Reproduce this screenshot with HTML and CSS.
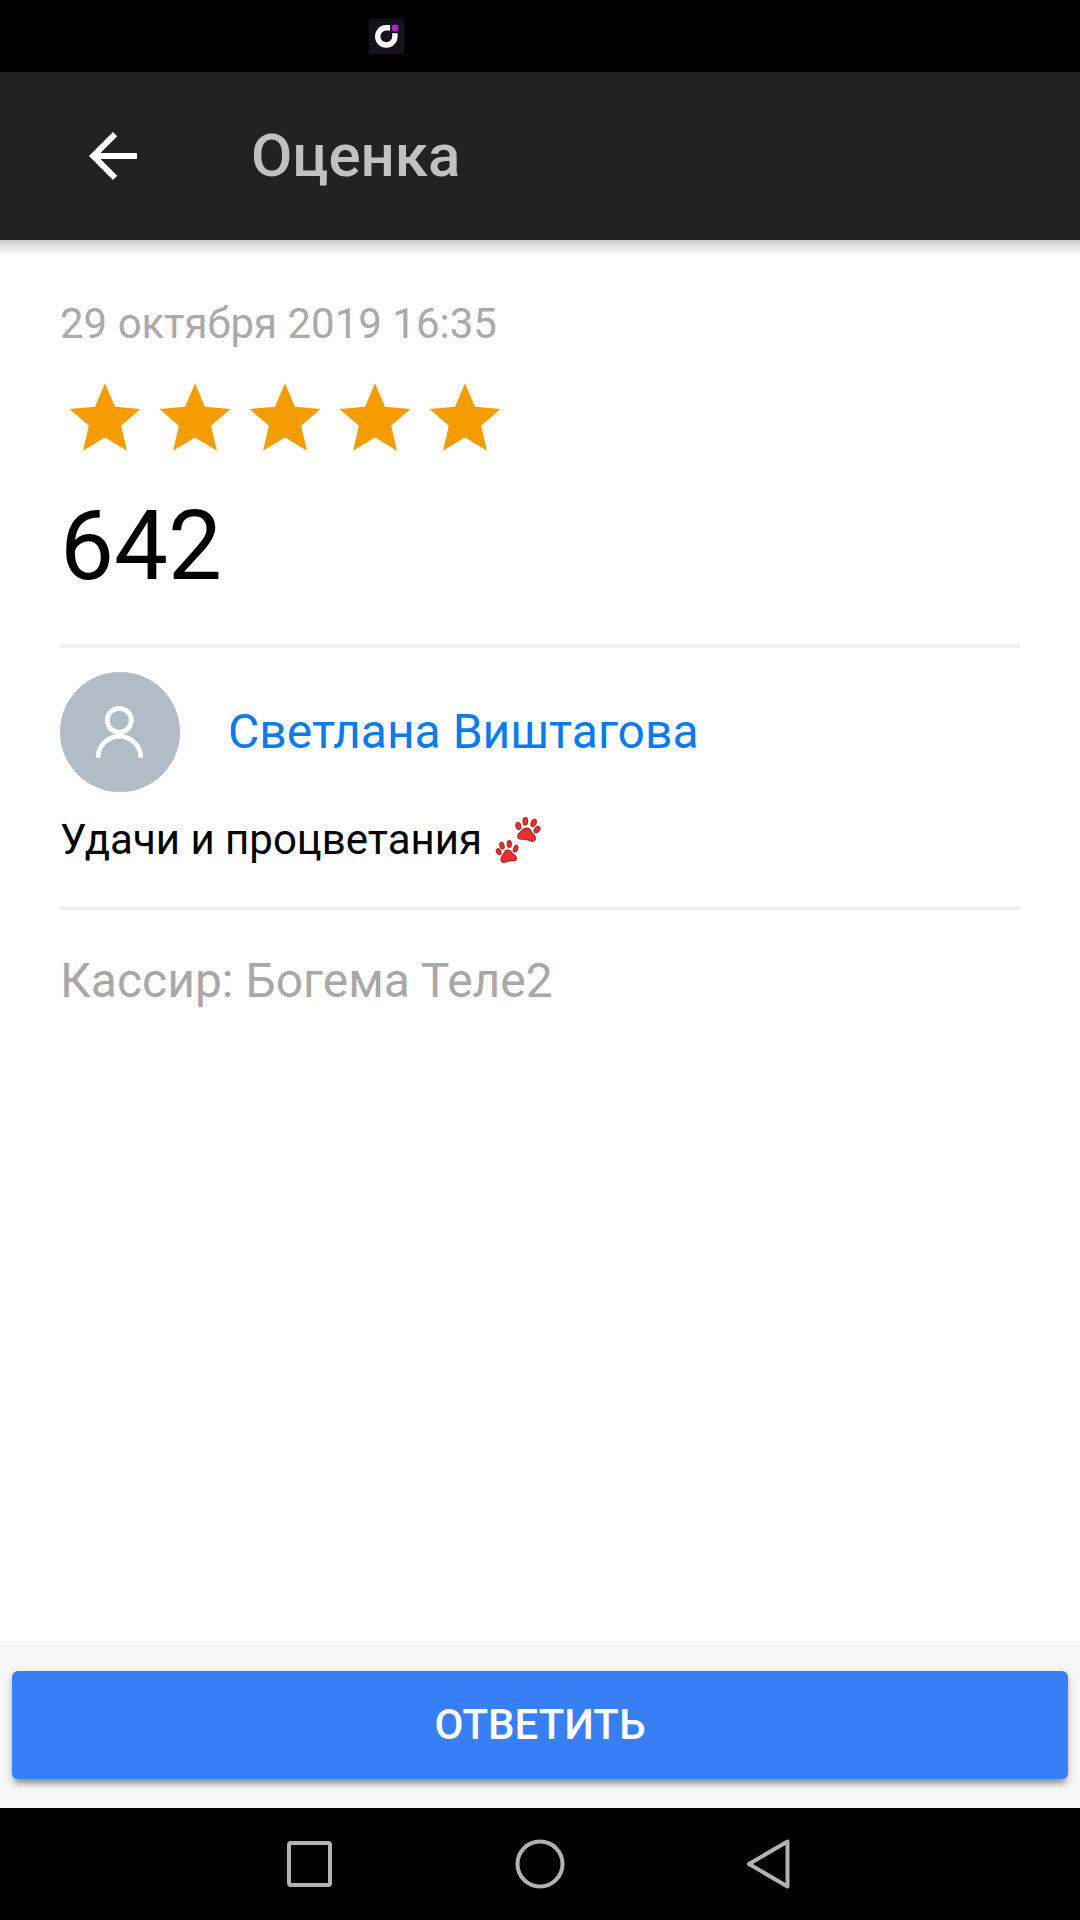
FILE: index.html
```html
<!DOCTYPE html>
<html lang="ru">
<head>
  <meta charset="utf-8">
  <meta name="viewport" content="width=device-width, initial-scale=1">
  <title>Оценка</title>
  <link rel="stylesheet" href="styles.css">
</head>
<body>
  <div class="status-bar">
    <svg class="status-icon" viewBox="0 0 35 35" aria-hidden="true">
      <rect width="35" height="35" fill="#150f20"/>
      <path d="M21 8.8H17.3A8.6 8.6 0 1 0 25.9 17.4V14.2" fill="none" stroke="#fff" stroke-width="5.4"/>
      <circle cx="26" cy="9" r="3.4" fill="#b91fd8"/>
    </svg>
  </div>

  <header class="toolbar">
    <button class="back-button" type="button" aria-label="Назад">
      <svg viewBox="0 0 24 24" aria-hidden="true"><path fill="#fff" d="M20 11H7.83l5.59-5.59L12 4l-8 8 8 8 1.41-1.41L7.83 13H20z"/></svg>
    </button>
    <h1 class="toolbar-title">Оценка</h1>
  </header>

  <main class="content">
    <time class="date" datetime="2019-10-29T16:35">29 октября 2019 16:35</time>
    <div class="stars" role="img" aria-label="5 из 5">
      <svg viewBox="0 0 512 512"><path id="star" d="M256 372.686L380.83 448l-33.021-142.066L458 210.409l-145.267-12.267L256 64l-56.743 134.142L54 210.409l110.192 95.525L131.161 448z"/></svg>
      <svg viewBox="0 0 512 512"><use href="#star"/></svg>
      <svg viewBox="0 0 512 512"><use href="#star"/></svg>
      <svg viewBox="0 0 512 512"><use href="#star"/></svg>
      <svg viewBox="0 0 512 512"><use href="#star"/></svg>
    </div>
    <p class="amount">642</p>

    <section class="review">
      <div class="author">
        <svg class="avatar" viewBox="0 0 120 120" aria-hidden="true">
          <circle cx="60" cy="60" r="60" fill="#b0bcc6"/>
          <g fill="none" stroke="#fff" stroke-width="4.8">
            <circle cx="59.3" cy="48.3" r="12"/>
            <path d="M38 85.8A21.4 21.4 0 0 1 80.8 85.8"/>
          </g>
        </svg>
        <a class="author-name" href="#">Светлана Виштагова</a>
      </div>
      <p class="comment">
        Удачи и процветания
        <svg class="paws" viewBox="0 0 144 144" role="img" aria-label="Следы лап">
          <g fill="#e5322d" stroke="#b62b2b" stroke-width="4">
            <ellipse cx="73" cy="30" rx="7" ry="10" transform="rotate(-12 73 30)"/>
            <ellipse cx="94" cy="16" rx="7" ry="11"/>
            <ellipse cx="119" cy="21" rx="7" ry="11" transform="rotate(25 119 21)"/>
            <ellipse cx="129" cy="41" rx="7" ry="10" transform="rotate(40 129 41)"/>
            <path d="M86 42C94 33 108 35 111 46C113 53 122 56 124 64C126 74 117 78 109 74C101 69 92 69 84 69C75 70 69 64 72 57C75 51 81 48 86 42Z"/>
            <ellipse cx="14" cy="107" rx="6" ry="9" transform="rotate(-28 14 107)"/>
            <ellipse cx="24" cy="89" rx="6" ry="10" transform="rotate(-15 24 89)"/>
            <ellipse cx="46" cy="84" rx="6" ry="10"/>
            <ellipse cx="65" cy="98" rx="6" ry="10" transform="rotate(22 65 98)"/>
            <path d="M32 108C37 100 49 101 53 110C56 115 65 118 67 125C68 132 62 135 55 134C47 132 42 135 36 138C28 141 20 137 21 129C23 122 28 116 32 108Z"/>
          </g>
        </svg>
      </p>
    </section>

    <p class="cashier">Кассир: Богема Теле2</p>
  </main>

  <footer class="actions">
    <button class="reply-button" type="button">ОТВЕТИТЬ</button>
  </footer>

  <nav class="system-nav" aria-label="Система">
    <button type="button" aria-label="Недавние">
      <svg viewBox="0 0 56 56"><rect x="7" y="7" width="41" height="42" rx="2"/></svg>
    </button>
    <button type="button" aria-label="Домой">
      <svg viewBox="0 0 56 56"><circle cx="28" cy="28" r="22.5"/></svg>
    </button>
    <button type="button" aria-label="Назад">
      <svg viewBox="0 0 56 56"><path d="M45.5 5.5V50.5L7 28Z"/></svg>
    </button>
  </nav>
</body>
</html>
```
FILE: styles.css
```css
* {
  box-sizing: border-box;
}

body {
  margin: 0;
  min-height: 100vh;
  display: flex;
  flex-direction: column;
  background: #fff;
  color: #000;
  font-family: Roboto, "Noto Sans", sans-serif;
  font-size: 42px;
  line-height: 60px;
}

button {
  margin: 0;
  padding: 0;
  border: 0;
  background: none;
  font: inherit;
  cursor: pointer;
}

svg {
  display: block;
}

h1,
p {
  margin: 0;
}

.status-bar {
  height: 72px;
  padding-left: 369px;
  display: flex;
  align-items: center;
  background: #000;
}

.status-icon {
  width: 35px;
  height: 35px;
}

.toolbar {
  position: relative;
  height: 168px;
  padding: 0 77px;
  display: flex;
  align-items: center;
  gap: 102px;
  background: #222;
}

/* soft shadow cast on the content */
.toolbar::after {
  content: "";
  position: absolute;
  top: 100%;
  left: 0;
  right: 0;
  height: 16px;
  background: linear-gradient(#c8c8c8, #e6e6e6 45%, #fff);
}

.back-button,
.back-button svg {
  width: 72px;
  height: 72px;
}

.toolbar-title {
  color: #c1c1c1;
  font-size: 60px;
  font-weight: 500;
  line-height: 72px;
}

.content {
  flex: 1;
  padding: 54px 60px;
}

.date {
  display: block;
  color: #aaa;
}

.stars {
  margin-top: 18px;
  display: flex;
  fill: #f59c00;
}

.stars svg {
  width: 90px;
  height: 90px;
}

.amount {
  margin: 24px 0 39px;
  font-size: 96px;
  line-height: 120px;
}

.review {
  padding: 24px 0 37px;
  border-top: 3px solid #eee;
  border-bottom: 3px solid #eee;
}

.author {
  display: flex;
  align-items: center;
  gap: 48px;
}

.avatar {
  width: 120px;
  height: 120px;
}

.author-name {
  color: #0a7aee;
  font-size: 48px;
  text-decoration: none;
}

.comment {
  margin-top: 18px;
  display: flex;
  align-items: center;
  gap: 12px;
}

.paws {
  width: 48px;
  height: 48px;
}

.cashier {
  margin-top: 41px;
  color: #a8a8a8;
  font-size: 48px;
}

.actions {
  padding: 30px 12px 29px;
  background: #f8f8f8;
}

.reply-button {
  display: block;
  width: 100%;
  height: 108px;
  border-radius: 6px;
  background: #387ef5;
  box-shadow: 0 6px 6px -2px rgba(0, 0, 0, 0.36), 0 3px 12px rgba(0, 0, 0, 0.16);
  color: #fff;
  font-weight: 500;
}

.system-nav {
  height: 112px;
  display: flex;
  align-items: center;
  justify-content: center;
  background: #000;
}

.system-nav button {
  width: 230px;
  display: flex;
  justify-content: center;
}

.system-nav svg {
  width: 56px;
  height: 56px;
  fill: none;
  stroke: #b2b2b2;
  stroke-width: 4;
  stroke-linejoin: round;
}
```
